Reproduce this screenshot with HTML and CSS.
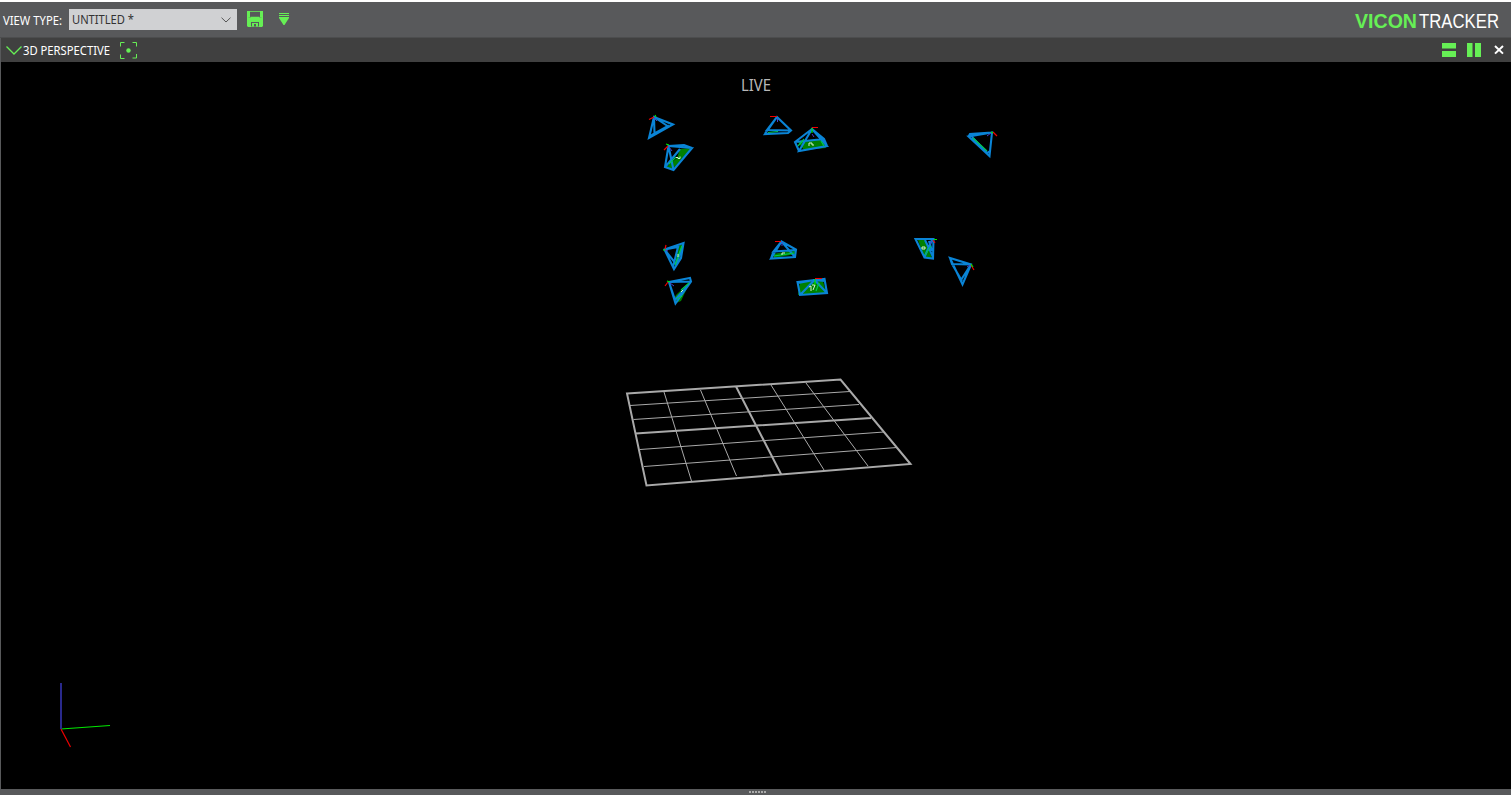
FILE: index.html
```
<!DOCTYPE html>
<html lang="en">
<head>
<meta charset="utf-8">
<title>Vicon Tracker</title>
<link rel="stylesheet" href="styles.css">
</head>
<body>
<div class="app">
  <header class="toolbar">
    <svg class="label" width="62" height="24"><text x="0" y="16" textLength="59" lengthAdjust="spacingAndGlyphs">VIEW TYPE:</text></svg>
    <div class="select">
      <svg width="66" height="20"><text x="0" y="14" textLength="62" lengthAdjust="spacingAndGlyphs">UNTITLED *</text></svg>
      <svg class="chevron" width="10" height="6" viewBox="0 0 10 6"><path d="M.5 .7 5 5 9.500 .7"/></svg>
    </div>
    <svg class="save" width="16" height="16" viewBox="0 0 16 16">
      <path class="green" d="M0 0h1.500v6.500h13V0H16v15l-1 1H1l-1-1zM2.500 0h11v.8h-11zM3.500 5.800h9v.7h-9z"/>
      <path class="green" d="M1 0h2v6.500H1zM13 0h2v6.500h-2z"/>
      <path class="cut" d="M4 11h8v4.500H4z"/>
      <path class="green" d="M5 12h6v3.500H5z"/>
      <path class="cut" d="M7 13h2v2.500H7z"/>
    </svg>
    <svg class="dropdown" width="10" height="13" viewBox="0 0 10 13"><path class="green" d="M0 0h10v1H0zM0 2h10v1H0zM0 4h10v1L5.500 12h-1L0 5z"/></svg>
    <svg class="logo" width="150" height="26" viewBox="0 0 150 26">
      <text class="brand" x="1" y="17.500" textLength="62" lengthAdjust="spacingAndGlyphs">VICON</text>
      <text class="product" x="65" y="17.500" textLength="80" lengthAdjust="spacingAndGlyphs">TRACKER</text>
    </svg>
  </header>
  <div class="panebar">
    <svg class="expand" width="16" height="9" viewBox="0 0 16 9"><path d="M.5 .5 8 8 15.500 .5"/></svg>
    <svg class="label" width="90" height="22"><text x="1" y="15.500" textLength="87" lengthAdjust="spacingAndGlyphs">3D PERSPECTIVE</text></svg>
    <svg class="focus" width="17" height="17" viewBox="0 0 17 17"><path d="M.5 4.500V.5h4M12.500 .5h4v4M16.500 12v4h-4M4.500 16.500h-4v-4"/><circle cx="8.500" cy="8.500" r="2.200"/></svg>
    <svg class="panetools" width="64" height="16" viewBox="0 0 64 16">
      <path class="green" d="M0 1h14v5.500H0zM0 9h14v6H0zM25 1h5.500v14H25zM33 1h6v14h-6z"/>
      <path class="close" d="m53 4 8 7.600M61 4l-8 7.600"/>
    </svg>
  </div>
  <main class="viewport">
    <svg class="scene" width="1510" height="727" viewBox="1 62 1510 727">
      <text class="live" x="741" y="91" textLength="30" lengthAdjust="spacingAndGlyphs">LIVE</text>

      <g class="grid">
        <path class="minor" d="M664 392 691.500 481M700.500 390 736.500 476M771 385 824 470M806 383 868 466M630 405.500 850 391.500M633.500 419.500 859 404.500M640 449.500 884 432M644 466.500 897 447.500"/>
        <path class="major" d="M627 393.500 840.500 379.500 910.500 464 646.500 485.500ZM736 386.500 781 474M635.500 433.500 871 418"/>
      </g>

      <g class="cameras">
        <path class="face" d="m680 149 11-1-18 21-7-2 11-9zM797 141l26-2 3 9-22 2zM678 246l5-2-3 15-5 7zM677 294l13-12-9 19-5 2-2-5zM773 254l22-4 1 4-22 4zM800 282l23-1 3 12-28 2zM918 240h7l7 18-8-1z"/>
        <path class="wire" d="M654 117 673 124.500 649 138ZM654 117 654.500 134M654 117 669 127M649.500 136.500 654.500 133.500 669 125.500"/>
        <path class="wire" d="M668.500 146 692 148 673.500 170 665 167ZM668.500 146 684 145 692 148M668.500 146 673.500 170M666 166 680 149"/>
        <path class="wire" d="M777 117 791 130.500 788 133 765 134ZM777 117 767 130 791 130.500M765 134 767 130"/>
        <path class="wire" d="M812 129 827 146 799 151ZM812 129 795 142 799 151M812 129 824 139 827 146M795 142 824 139"/>
        <path class="wire" d="M992 132.500 989.500 156 968.500 136.500ZM968.500 136.500 970 134 992 132.500M990 151 987 153 972 137"/>
        <path class="wire" d="M664.500 249.500 683.500 243 681 258 674 269ZM664.500 249.500 678 247 673 267M664.500 249.500 676 264 683 245"/>
        <path class="wire" d="M669 282 690 278 691 281.500 675.500 303.500ZM669 282 691 281.500M669 282 675 300 690 283"/>
        <path class="wire" d="M781.500 241.500 796 249.500 795 257 771 258.500ZM781.500 241.500 773.500 251.500 796 250M781.500 241.500 795 257M771 258.500 773.500 251.500"/>
        <path class="wire" d="M797.500 282 824.500 279 827 293 800 295ZM814.500 280 800 295M814.500 280 827 293M798 283 814 280 825 281"/>
        <path class="wire" d="M915.500 239 933.500 239 933 258.500 924.500 257.500ZM925 240 933 257M932 240 924.500 257M929 241 932 251"/>
        <path class="wire" d="M971 264.500 962.500 284.500 950 258ZM950 258 952 264 971 264.500M952 264 962 281M970 266 961 280"/>
        <path class="lime" d="m669 164 7-7M768 132.500l10-1M798 146l6-7M821 141l3 5M973 138l14 13M675 265l7-19M681 290l8-7M677 299l5-3M774 256l20-3M925 255l6-9M816 291l3-8"/>
        <path class="id" d="M676 157.500h2v1h2v-2M809 146v-3h3v2h2M678 257v-3M681 292l2-2M782 255v-2h3M809 287l2-1v5M812 285h3l-2 5M922 249h3v-2h-3v2"/>
        <path class="axis-x" d="m654 117-5 2.500M668 146l-4 4M777 116.500h-7M812 127.500h6M993 132l4 4M665 249l1-4M668 282l-3 4M781 241.500h-6M815 278.500h7M933 240l2 3M971 265l3 5"/>
        <path class="axis-y" d="m655 115 1 2M666 144l3 1M812 128v5M991 132l2 1M663 250h3M667 281l3 1M815 279v6M934 239.500h3M971 264l2 3"/>
        <path class="axis-z" d="m654 118 3 3M669 147l3 4M777.500 118v4M812 134l2 3M991 133l-4 3M665 250l3 1M670 283l4 3M782 242v4M932 241l-2 3M970 265l-3 2"/>
      </g>

      <g class="axes">
        <path class="axis-y" d="m61 729 49-3.500"/>
        <path class="axis-x" d="m61 729 9.500 18"/>
        <path class="axis-z major-axis" d="M61 729V683"/>
      </g>
    </svg>
  </main>
  <footer class="splitter"><i></i><i></i><i></i><i></i><i></i><i></i></footer>
</div>
</body>
</html>
```
FILE: styles.css
```
* { box-sizing: border-box; }
body { margin: 0; background: #fff; font-family: "Noto Sans", "Open Sans", sans-serif; }
svg { display: block; flex: none; overflow: visible; }
.app { height: 795px; padding-top: 2px; display: flex; flex-direction: column; overflow: hidden; }
.toolbar { height: 36px; flex: none; display: flex; align-items: flex-start; padding: 7px 7px 0 3px; background: #58595b; border-bottom: 1px solid #4c4d4e; }
.label text { fill: #fff; font-size: 12px; }
.select { width: 168px; height: 21px; margin-left: 4px; padding: 0 6px 0 3px; display: flex; align-items: center; justify-content: space-between; background: #d0d1d3; }
.select text { fill: #333; font-size: 12px; }
.chevron { fill: none; stroke: #555; }
.save { margin: 2px 0 0 10px; }
.dropdown { margin: 4px 0 0 16px; }
.green { fill: #66ef55; }
.cut { fill: #58595b; }
.logo { margin-left: auto; margin-top: 1px; font-family: "Liberation Sans", Arial, sans-serif; }
.brand { fill: #66ef55; font-size: 19.5px; font-weight: 700; }
.product { fill: #fff; font-size: 19.5px; }
.panebar { height: 24px; flex: none; display: flex; align-items: center; padding: 0 5px 0 6px; background: #404040; border-left: 1px solid #58595b; }
.expand { margin-left: -1px; fill: none; stroke: #66ef55; stroke-width: 1.3; }
.focus { margin-left: 8px; }
.focus path { fill: none; stroke: #66ef55; }
.focus circle { fill: #66ef55; }
.panetools { margin-left: auto; }
.close { fill: none; stroke: #fff; stroke-width: 2; }
.viewport { height: 727px; flex: none; background: #000; border-left: 1px solid #58595b; }
.scene { fill: none; }
.live { fill: #b8b8b8; font-size: 15.5px; }
.grid { stroke: #a9a9a9; }
.minor { stroke-width: 1; }
.major { stroke-width: 2; }
.face { fill: #008000; }
.wire { stroke: #0a84d6; stroke-width: 2.1; }
.lime { stroke: #00c850; stroke-width: 1.2; }
.id { stroke: #d4f0d4; }
.axis-x { stroke: #f00000; stroke-width: 1.2; }
.axis-y { stroke: #00e800; stroke-width: 1.2; }
.axis-z { stroke: #4a3fc8; }
.major-axis { stroke: #29298c; stroke-width: 2; }
.splitter { height: 6px; display: flex; justify-content: center; gap: 1px; padding: 2px 0 0 4px; background: #58595b; }
.splitter i { width: 2px; height: 2px; background: #aaa; }
```
